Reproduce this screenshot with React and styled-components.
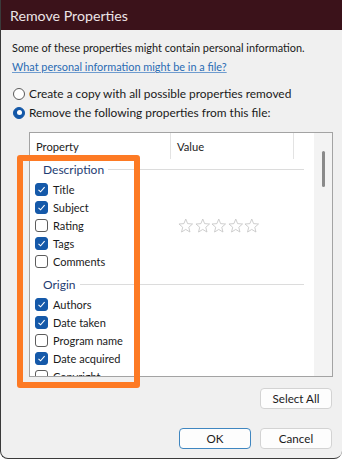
import React from "react";
import styled, { createGlobalStyle } from "styled-components";

const GlobalStyle = createGlobalStyle`
  html, body { margin: 0; padding: 0; background: #ffffff; }
  body { font-family: Lato, "Noto Sans", sans-serif; }
  #root { width: 342px; height: 460px; }
`;

const Window = styled.div`
  position: relative;
  width: 342px;
  height: 459px;
  box-sizing: border-box;
  display: flex;
  flex-direction: column;
  background: #f0f0f0;
  border-left: 1px solid #3a3a3a;
  border-bottom: 1px solid #3a3a3a;
  border-radius: 0 0 8px 8px;
  overflow: hidden;
  font-family: Lato, "Noto Sans", sans-serif;
  font-size: 11px;
  color: #1a1a1a;
`;

const TitleBar = styled.div`
  height: 30px;
  flex: none;
  display: flex;
  align-items: center;
  padding-left: 9px;
  background: #3b121a;
  color: #ece4e6;
  font-size: 14.2px;
`;

const Body = styled.div`
  flex: 1;
  display: flex;
  flex-direction: column;
  padding: 8px 10px 0 11px;
`;

const Line = styled.div`
  height: 19px;
  line-height: 19px;
  white-space: nowrap;
  font-size: 10.9px;
`;

const Link = styled(Line)`
  color: #2a6cb4;
  text-decoration: underline;
  text-decoration-color: #6f9ccf;
`;

const RadioGroup = styled.div`
  margin-top: 8px;
  display: flex;
  flex-direction: column;
`;

const RadioRow = styled.label`
  height: 19px;
  display: flex;
  align-items: center;
  gap: 4px;
  padding-left: 1px;
  white-space: nowrap;
  font-size: 11.9px;
`;

const RadioDot = styled.span`
  box-sizing: border-box;
  width: 12px;
  height: 12px;
  border-radius: 50%;
  flex: none;
  display: flex;
  align-items: center;
  justify-content: center;
  background: ${(p) => (p.$on ? "#1458a8" : "#ffffff")};
  border: 1px solid ${(p) => (p.$on ? "#1458a8" : "#5a5a5a")};
  &::after {
    content: "";
    display: ${(p) => (p.$on ? "block" : "none")};
    width: 5px;
    height: 5px;
    border-radius: 50%;
    background: #ffffff;
  }
`;

const ListBox = styled.div`
  margin: 10px 0 0 17px;
  width: 304px;
  height: 245px;
  box-sizing: border-box;
  border: 1px solid #a3a3a3;
  background: #ffffff;
  display: grid;
  grid-template-columns: 1fr 18px;
  overflow: hidden;
`;

const ListContent = styled.div`
  display: flex;
  flex-direction: column;
  overflow: hidden;
`;

const HeaderRow = styled.div`
  height: 26px;
  flex: none;
  display: grid;
  grid-template-columns: 141px 123px 1fr;
  align-items: stretch;
`;

const HeaderCell = styled.div`
  display: flex;
  align-items: center;
  padding-left: ${(p) => p.$pad}px;
  border-right: ${(p) => (p.$sep ? "1px solid #e3e3e3" : "none")};
  color: #222;
  font-size: 11.2px;
`;

const GroupRow = styled.div`
  height: 21px;
  flex: none;
  display: flex;
  align-items: center;
  padding: 0 10px 0 13px;
  margin-top: ${(p) => p.$gap || 0}px;
  color: #1e3c72;
  font-size: 12px;
  gap: 4px;
  &::after {
    content: "";
    flex: 1;
    height: 1px;
    background: #dcdcdc;
  }
`;

const ItemRow = styled.div`
  height: 18px;
  flex: none;
  display: grid;
  grid-template-columns: 141px 1fr;
  align-items: center;
`;

const ItemName = styled.label`
  display: flex;
  align-items: center;
  gap: 5px;
  padding-left: 5px;
  white-space: nowrap;
`;

const Box = styled.span`
  box-sizing: border-box;
  width: 13px;
  height: 13px;
  flex: none;
  border-radius: 3px;
  display: flex;
  align-items: center;
  justify-content: center;
  background: ${(p) => (p.$on ? "#1559a9" : "#ffffff")};
  border: 1px solid ${(p) => (p.$on ? "#1559a9" : "#5c5c5c")};
`;

const ValueCell = styled.div`
  padding-left: 7px;
  display: flex;
  align-items: center;
  gap: 1px;
`;

const ScrollTrack = styled.div`
  background: #f3f3f3;
  display: flex;
  justify-content: center;
  padding-top: 18px;
`;

const Thumb = styled.div`
  width: 3px;
  height: 36px;
  border-radius: 2px;
  background: #8a8a8a;
`;

const ButtonRow = styled.div`
  display: flex;
  justify-content: flex-end;
  gap: 9px;
  margin-top: ${(p) => p.$top}px;
`;

const Button = styled.button`
  width: 72px;
  height: 21px;
  box-sizing: border-box;
  border-radius: 4px;
  background: #fdfdfd;
  border: 1px solid ${(p) => (p.$primary ? "#3f86c0" : "#d3d3d3")};
  font-family: inherit;
  font-size: 11.6px;
  color: #1a1a1a;
  padding: 0;
`;

const Highlight = styled.div`
  position: absolute;
  left: 16px;
  top: 155px;
  width: 123px;
  height: 233px;
  box-sizing: border-box;
  border: 6px solid #fd7a24;
  border-radius: 3px;
  pointer-events: none;
`;

const Check = () => (
  <svg width="9" height="9" viewBox="0 0 9 9">
    <path d="M1.5 4.8 L3.6 6.8 L7.6 2.2" fill="none" stroke="#fff" strokeWidth="1.1" />
  </svg>
);

const Star = () => (
  <svg width="15.5" height="15" viewBox="0 0 24 23">
    <path
      d="M12 1.5 L14.9 8.6 L22.5 9.2 L16.7 14.2 L18.5 21.6 L12 17.6 L5.5 21.6 L7.3 14.2 L1.5 9.2 L9.1 8.6 Z"
      fill="none"
      stroke="#c4c4c4"
      strokeWidth="1.3"
      strokeLinejoin="round"
    />
  </svg>
);

const groups = [
  {
    name: "Description",
    gap: 0,
    items: [
      ["Title", true],
      ["Subject", true],
      ["Rating", false, true],
      ["Tags", true],
      ["Comments", false],
    ],
  },
  {
    name: "Origin",
    gap: 4,
    items: [
      ["Authors", true],
      ["Date taken", true],
      ["Program name", false],
      ["Date acquired", true],
      ["Copyright", false],
    ],
  },
];

export default function App() {
  return (
    <>
      <GlobalStyle />
      <Window>
        <TitleBar>Remove Properties</TitleBar>
        <Body>
          <Line>Some of these properties might contain personal information.</Line>
          <Link>What personal information might be in a file?</Link>
          <RadioGroup>
            <RadioRow>
              <RadioDot />
              Create a copy with all possible properties removed
            </RadioRow>
            <RadioRow>
              <RadioDot $on />
              Remove the following properties from this file:
            </RadioRow>
          </RadioGroup>
          <ListBox>
            <ListContent>
              <HeaderRow>
                <HeaderCell $pad={6} $sep>Property</HeaderCell>
                <HeaderCell $pad={6} $sep>Value</HeaderCell>
                <HeaderCell $pad={0} />
              </HeaderRow>
              {groups.map((g) => (
                <React.Fragment key={g.name}>
                  <GroupRow $gap={g.gap}>{g.name}</GroupRow>
                  {g.items.map(([name, on, stars]) => (
                    <ItemRow key={name}>
                      <ItemName>
                        <Box $on={on}>{on && <Check />}</Box>
                        {name}
                      </ItemName>
                      <ValueCell>
                        {stars && [0, 1, 2, 3, 4].map((i) => <Star key={i} />)}
                      </ValueCell>
                    </ItemRow>
                  ))}
                </React.Fragment>
              ))}
            </ListContent>
            <ScrollTrack>
              <Thumb />
            </ScrollTrack>
          </ListBox>
          <ButtonRow $top={11}>
            <Button>Select All</Button>
          </ButtonRow>
          <ButtonRow $top={19}>
            <Button $primary>OK</Button>
            <Button>Cancel</Button>
          </ButtonRow>
        </Body>
        <Highlight />
      </Window>
    </>
  );
}
